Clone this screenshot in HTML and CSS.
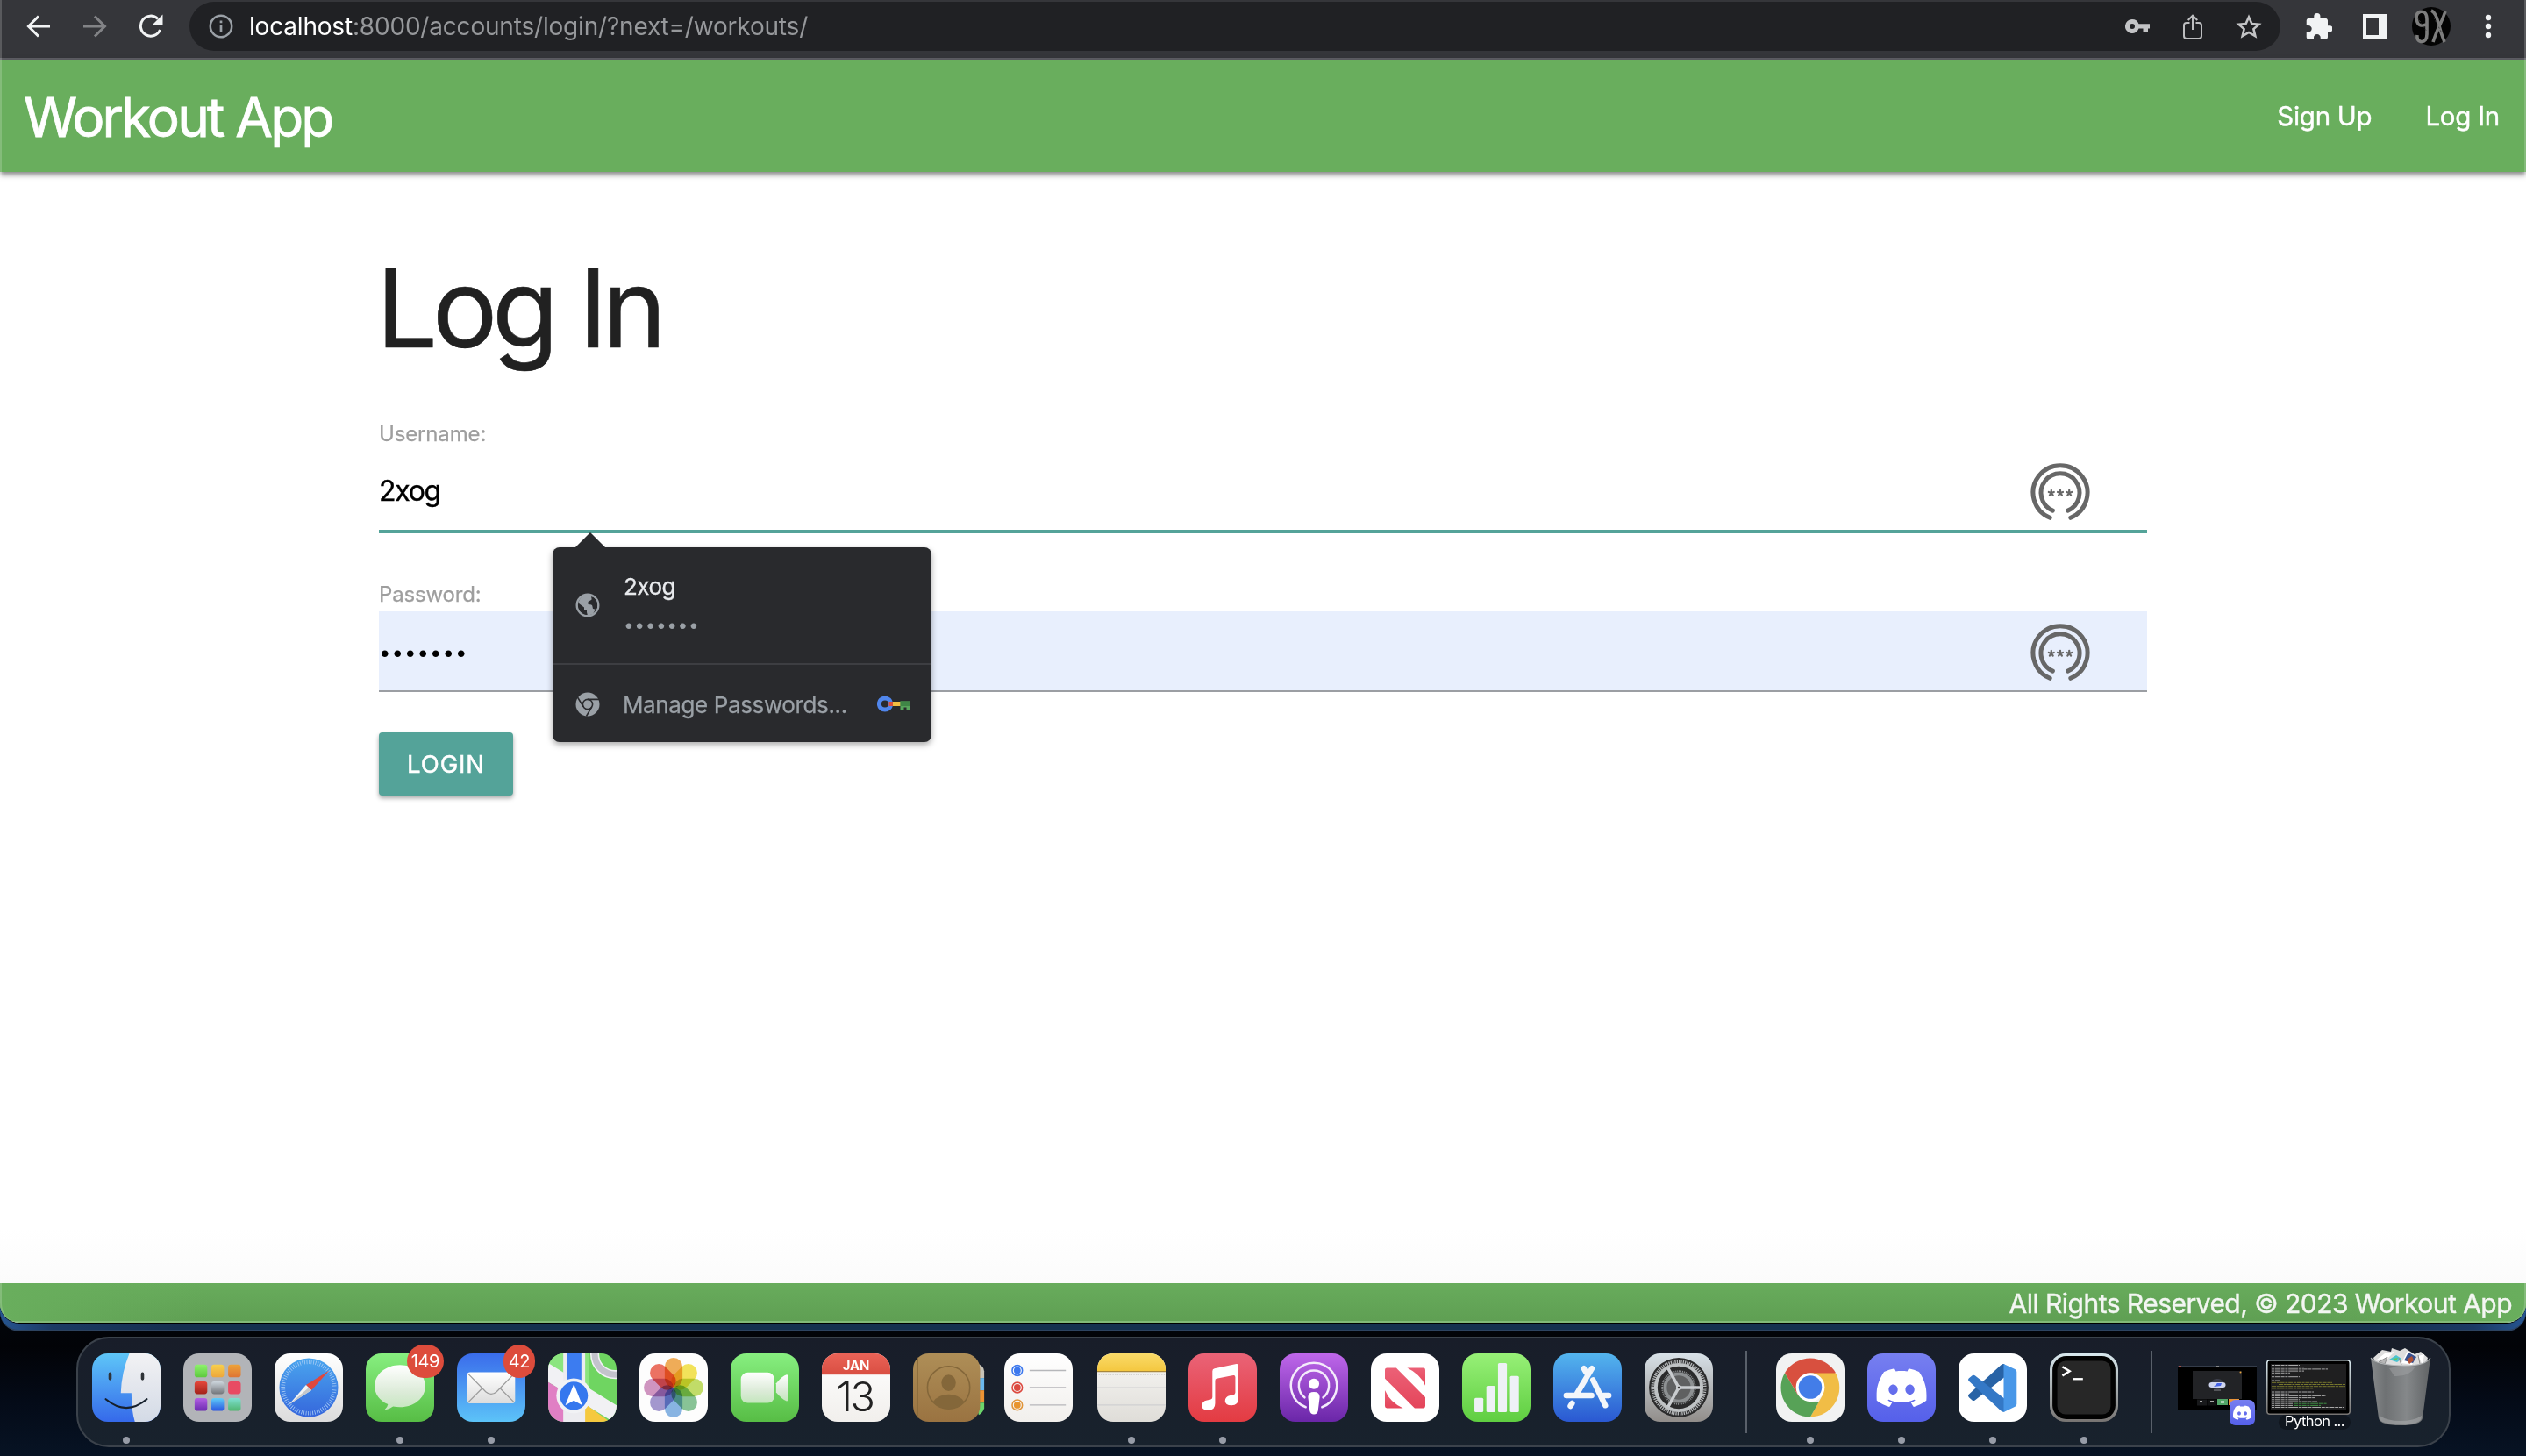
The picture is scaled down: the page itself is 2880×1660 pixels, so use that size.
FILE: index.html
```html
<!DOCTYPE html>
<html lang="en">
<head>
<meta charset="utf-8">
<title>Workout App</title>
<link rel="stylesheet" href="styles.css">
</head>
<body>
<svg class="defs" width="0" height="0" aria-hidden="true">
  <defs>
    <linearGradient id="finderBlue" x1="0" y1="0" x2="0" y2="1"><stop offset="0" stop-color="#5ec6f8"/><stop offset="1" stop-color="#3569ea"/></linearGradient>
    <linearGradient id="finderWhite" x1="0" y1="0" x2="0" y2="1"><stop offset="0" stop-color="#f2f2f4"/><stop offset="1" stop-color="#d3dae6"/></linearGradient>
    <linearGradient id="green" x1="0" y1="0" x2="0" y2="1"><stop offset="0" stop-color="#87ef80"/><stop offset="1" stop-color="#57bd45"/></linearGradient>
    <linearGradient id="mailBlue" x1="0" y1="0" x2="0" y2="1"><stop offset="0" stop-color="#3a6ceb"/><stop offset="1" stop-color="#5cc3f8"/></linearGradient>
    <linearGradient id="paper" x1="0" y1="0" x2="0" y2="1"><stop offset="0" stop-color="#ffffff"/><stop offset="1" stop-color="#dcdcdc"/></linearGradient>
    <linearGradient id="paperWarm" x1="0" y1="0" x2="0" y2="1"><stop offset="0" stop-color="#ffffff"/><stop offset="1" stop-color="#f1efec"/></linearGradient>
    <linearGradient id="note" x1="0" y1="0" x2="0" y2="1"><stop offset="0" stop-color="#f8f7f5"/><stop offset="1" stop-color="#dfddd8"/></linearGradient>
    <linearGradient id="noteTop" x1="0" y1="0" x2="0" y2="1"><stop offset="0" stop-color="#fadb6a"/><stop offset="1" stop-color="#f4c73f"/></linearGradient>
    <linearGradient id="dial" x1="0" y1="0" x2="0" y2="1"><stop offset="0" stop-color="#4aa5ee"/><stop offset="1" stop-color="#3566dc"/></linearGradient>
    <linearGradient id="bubble" x1="0" y1="0" x2="0" y2="1"><stop offset="0" stop-color="#ffffff"/><stop offset=".6" stop-color="#dcebd8"/><stop offset="1" stop-color="#c4e6bd"/></linearGradient>
    <linearGradient id="calTop" x1="0" y1="0" x2="0" y2="1"><stop offset="0" stop-color="#ea6357"/><stop offset="1" stop-color="#d94e42"/></linearGradient>
    <linearGradient id="leather" x1="0" y1="0" x2="0" y2="1"><stop offset="0" stop-color="#ae8e57"/><stop offset="1" stop-color="#9a7341"/></linearGradient>
    <linearGradient id="music" x1="0" y1="0" x2="0" y2="1"><stop offset="0" stop-color="#ea6377"/><stop offset="1" stop-color="#e33b42"/></linearGradient>
    <linearGradient id="pod" x1="0" y1="0" x2="0" y2="1"><stop offset="0" stop-color="#bf67ea"/><stop offset="1" stop-color="#6a26a8"/></linearGradient>
    <linearGradient id="news" x1="0" y1="0" x2="0" y2="1"><stop offset="0" stop-color="#ec6177"/><stop offset="1" stop-color="#e4455a"/></linearGradient>
    <linearGradient id="numbers" x1="0" y1="0" x2="0" y2="1"><stop offset="0" stop-color="#97f077"/><stop offset="1" stop-color="#5fce41"/></linearGradient>
    <linearGradient id="store" x1="0" y1="0" x2="0" y2="1"><stop offset="0" stop-color="#53b5ee"/><stop offset="1" stop-color="#2a58d2"/></linearGradient>
    <linearGradient id="steel" x1="0" y1="0" x2="0" y2="1"><stop offset="0" stop-color="#d8e1e8"/><stop offset="1" stop-color="#918d8a"/></linearGradient>
    <linearGradient id="discordBg" x1="0" y1="0" x2="0" y2="1"><stop offset="0" stop-color="#777ff0"/><stop offset="1" stop-color="#5560ea"/></linearGradient>
    <linearGradient id="frame" x1="0" y1="0" x2="0" y2="1"><stop offset="0" stop-color="#d8e8ee"/><stop offset="1" stop-color="#777472"/></linearGradient>
    <linearGradient id="bin" x1="0" y1="0" x2="1" y2="0"><stop offset="0" stop-color="#878a8c"/><stop offset=".25" stop-color="#6e7173"/><stop offset=".6" stop-color="#85888a"/><stop offset="1" stop-color="#606365"/></linearGradient>
    <linearGradient id="lp1" x1="0" y1="0" x2="0" y2="1"><stop offset="0" stop-color="#8df26c"/><stop offset="1" stop-color="#5dc93e"/></linearGradient>
    <linearGradient id="lp2" x1="0" y1="0" x2="0" y2="1"><stop offset="0" stop-color="#f7cf4d"/><stop offset="1" stop-color="#eda63a"/></linearGradient>
    <linearGradient id="lp3" x1="0" y1="0" x2="0" y2="1"><stop offset="0" stop-color="#eda23a"/><stop offset="1" stop-color="#de7433"/></linearGradient>
    <linearGradient id="lp4" x1="0" y1="0" x2="0" y2="1"><stop offset="0" stop-color="#e5473a"/><stop offset="1" stop-color="#a3231b"/></linearGradient>
    <linearGradient id="lp5" x1="0" y1="0" x2="0" y2="1"><stop offset="0" stop-color="#cdd6dd"/><stop offset="1" stop-color="#73757a"/></linearGradient>
    <linearGradient id="lp7" x1="0" y1="0" x2="0" y2="1"><stop offset="0" stop-color="#b35fe4"/><stop offset="1" stop-color="#6b2bb0"/></linearGradient>
    <linearGradient id="lp8" x1="0" y1="0" x2="0" y2="1"><stop offset="0" stop-color="#5fcdf9"/><stop offset="1" stop-color="#2a55e0"/></linearGradient>
    <linearGradient id="lp9" x1="0" y1="0" x2="0" y2="1"><stop offset="0" stop-color="#7fe0d2"/><stop offset="1" stop-color="#4fb56f"/></linearGradient>
    <clipPath id="tile"><rect width="100" height="100" rx="23"/></clipPath>
    <symbol id="discord" viewBox="0 0 24 24"><path fill="#fff" d="M20.317 4.3698a19.7913 19.7913 0 00-4.8851-1.5152.0741.0741 0 00-.0785.0371c-.211.3753-.4447.8648-.6083 1.2495-1.8447-.2762-3.68-.2762-5.4868 0-.1636-.3933-.4058-.8742-.6177-1.2495a.077.077 0 00-.0785-.037 19.7363 19.7363 0 00-4.8852 1.515.0699.0699 0 00-.0321.0277C.5334 9.0458-.319 13.5799.0992 18.0578a.0824.0824 0 00.0312.0561c2.0528 1.5076 4.0413 2.4228 5.9929 3.0294a.0777.0777 0 00.0842-.0276c.4616-.6304.8731-1.2952 1.226-1.9942a.076.076 0 00-.0416-.1057c-.6528-.2476-1.2743-.5495-1.8722-.8923a.077.077 0 01-.0076-.1277c.1258-.0943.2517-.1923.3718-.2914a.0743.0743 0 01.0776-.0105c3.9278 1.7933 8.18 1.7933 12.0614 0a.0739.0739 0 01.0785.0095c.1202.099.246.1981.3728.2924a.077.077 0 01-.0066.1276 12.2986 12.2986 0 01-1.873.8914.0766.0766 0 00-.0407.1067c.3604.698.7719 1.3628 1.225 1.9932a.076.076 0 00.0842.0286c1.961-.6067 3.9495-1.5219 6.0023-3.0294a.077.077 0 00.0313-.0552c.5004-5.177-.8382-9.6739-3.5485-13.6604a.061.061 0 00-.0312-.0286zM8.02 15.3312c-1.1825 0-2.1569-1.0857-2.1569-2.419 0-1.3332.9555-2.4189 2.157-2.4189 1.2108 0 2.1757 1.0952 2.1568 2.419 0 1.3332-.9555 2.4189-2.1569 2.4189zm7.9748 0c-1.1825 0-2.1569-1.0857-2.1569-2.419 0-1.3332.9554-2.4189 2.1569-2.4189 1.2108 0 2.1757 1.0952 2.1568 2.419 0 1.3332-.946 2.4189-2.1568 2.4189Z"/></symbol>
    <symbol id="keyring" viewBox="-34 -34 68 68">
      <g fill="none" stroke="#676767" stroke-width="5" stroke-linecap="round">
        <path d="M-11.8 28.3A31 31 0 1 1 11.8 28.3"/>
        <path d="M-8.6 20.1A22 22 0 1 1 8.6 20.1"/>
      </g>
      <g stroke="#676767" stroke-width="2.2" stroke-linecap="round">
        <path id="ast" d="M0 0V-3.2M0 0L3-1M0 0L1.9 2.6M0 0L-1.9 2.6M0 0L-3-1"/>
        <use href="#ast" x="-10.2"/><use href="#ast" x="10.2"/>
      </g>
    </symbol>
  </defs>
</svg>

<div class="rear-window">
<div class="window">
  <header class="toolbar">
    <div class="nav-buttons">
      <svg width="28" height="28" viewBox="0 0 28 28" fill="none" stroke="#f1f3f4" stroke-width="3"><path d="M27 14H3M14 2.5L2.5 14 14 25.500"/></svg>
      <svg width="28" height="28" viewBox="0 0 28 28" fill="none" stroke="#828386" stroke-width="3"><path d="M1 14H25M14 2.500L25.500 14 14 25.500"/></svg>
      <svg width="28" height="28" viewBox="0 0 28 28"><path d="M24.500 18A11.500 11.500 0 1 1 22 5.500" fill="none" stroke="#f1f3f4" stroke-width="3"/><path d="M27.500 .5V12.500H15.500Z" fill="#f1f3f4"/></svg>
    </div>
    <div class="omnibox">
      <svg class="info" width="28" height="28" viewBox="0 0 28 28"><circle cx="14" cy="14" r="12.200" fill="none" stroke="#9aa0a6" stroke-width="2.500"/><path d="M14 12.500V20.500M14 7.500V10.200" stroke="#9aa0a6" stroke-width="2.700"/></svg>
      <span class="url"><b>localhost</b>:8000/accounts/login/?next=/workouts/</span>
      <div class="omni-icons">
        <svg width="28" height="16" viewBox="0 0 28 16"><path fill="#c3c4c6" fill-rule="evenodd" d="M8 0a8 8 0 0 1 7.500 5.300H28V10.600H26V15H20.500V10.600H15.500A8 8 0 1 1 8 0zm0 5a3 3 0 1 0 0 6 3 3 0 0 0 0-6z"/></svg>
        <svg width="22" height="29" viewBox="0 0 22 29" fill="none" stroke="#bdbec0" stroke-width="2"><path d="M7.500 10H4Q1 10 1 13V25Q1 28 4 28H18Q21 28 21 25V13Q21 10 18 10H14.500M11 18V2M5.700 7L11 1.700 16.300 7"/></svg>
        <svg width="30" height="29" viewBox="0 0 30 29"><path d="M15 3.500L18.400 11 26.500 11.700 20.400 17.100 22.300 25.200 15 20.900 7.700 25.200 9.600 17.100 3.500 11.700 11.600 11Z" fill="none" stroke="#c3c4c6" stroke-width="2.600"/></svg>
      </div>
    </div>
    <div class="extensions">
      <svg width="30" height="30" viewBox="1.500 1 21 21"><path fill="#f1f3f4" d="M20.500 11H19V7c0-1.100-.9-2-2-2h-4V3.500a2.500 2.500 0 0 0-5 0V5H4c-1.100 0-1.990.9-1.990 2v3.800H3.500c1.490 0 2.700 1.210 2.700 2.700s-1.210 2.700-2.700 2.700H2V20c0 1.100.9 2 2 2h3.800v-1.500c0-1.490 1.210-2.700 2.700-2.700s2.700 1.210 2.700 2.700V22H17c1.100 0 2-.9 2-2v-4h1.500a2.500 2.500 0 0 0 0-5z"/></svg>
      <svg width="28" height="28" viewBox="0 0 28 28"><path fill="#f1f3f4" fill-rule="evenodd" d="M0 0H28V28H0ZM4 4V24H18V4Z"/></svg>
      <svg width="44" height="44" viewBox="0 0 44 44"><circle cx="22" cy="22" r="22" fill="#040404"/><g fill="none" stroke="#7d7d7d" stroke-width="3.600"><path d="M6 17Q3 8 9 5.500Q17 4 17 14V31Q17 40 10 39.500Q5 38 6 32M6 17Q8 23 16 20M22 4Q27 6 30 18T37 40M38 5Q34 16 31 22T24 40"/></g><path d="M6 12L17 28M25 12L34 30" stroke="#444" stroke-width="1" stroke-dasharray="2 2"/></svg>
      <svg width="8" height="28" viewBox="0 0 8 28" fill="#f1f3f4"><circle cx="4" cy="4" r="3.200"/><circle cx="4" cy="14" r="3.200"/><circle cx="4" cy="24" r="3.200"/></svg>
    </div>
  </header>

  <nav class="navbar">
    <a class="brand">Workout App</a>
    <div class="links"><a>Sign Up</a><a>Log In</a></div>
  </nav>

  <main class="content">
    <h1>Log In</h1>
    <label class="label">Username:</label>
    <div class="field focused">
      <span class="value">2xog</span>
      <svg class="keyring" width="68" height="68"><use href="#keyring"/></svg>
      <div class="popup">
        <svg class="arrow" width="36" height="18" viewBox="0 0 36 18"><path d="M0 18L18 0 36 18Z" fill="#292a2d"/></svg>
        <div class="suggestion">
          <svg width="28" height="28" viewBox="0 0 28 28"><circle cx="14" cy="14" r="12.300" fill="#292a2d" stroke="#9aa0a6" stroke-width="2.400"/><path fill="#9aa0a6" d="M8 4L19 2.500Q21 6 18 8L14.500 10V13L19 13.500 20 18 23 18.500 20 24 14 26 13 22 8.500 17.500 3.500 12Q4 7 8 4Z"/><path fill="#292a2d" d="M4 12L10 16.500V19L13 20V25Q4 23 3 14ZM18 4Q26 7 25 17L22 19 20.500 15 17 12.500 19 9Z"/></svg>
          <div class="credentials"><span class="user">2xog</span><span class="mask">•••••••</span></div>
        </div>
        <div class="manage">
          <svg width="28" height="28" viewBox="0 0 28 28"><circle cx="14" cy="14" r="13.500" fill="#9aa0a6"/><g fill="none" stroke="#292a2d" stroke-width="1.600"><circle cx="14" cy="14" r="5.600"/><path d="M14 8.400H27M9.200 16.800L2.500 6M18.800 16.800L12.500 27.500"/></g></svg>
          <span class="manage-text">Manage Passwords...</span>
          <svg width="38" height="19" viewBox="0 0 38 19"><circle cx="9" cy="9.500" r="6.600" fill="none" stroke="#5086ec" stroke-width="5"/><path d="M13.500 7H19V12H13.500Z" fill="#d9503f"/><path d="M18 7H27V12H18Z" fill="#f2bd42"/><path d="M26.500 6.500H37.500V17H33.500V13.500H30.500V17H26.500Z" fill="#58a55c"/><path d="M26.500 6.500H37.500V12H26.500Z" fill="#3f8646"/></svg>
        </div>
      </div>
    </div>
    <label class="label second">Password:</label>
    <div class="field autofill">
      <span class="value mask">•••••••</span>
      <svg class="keyring" width="68" height="68"><use href="#keyring"/></svg>
    </div>
    <button class="login">LOGIN</button>
  </main>

  <footer class="footer">All Rights Reserved, © 2023 Workout App</footer>
</div>
</div>

<div class="dock">
  <div class="app running"><svg viewBox="0 0 100 100"><g clip-path="url(#tile)"><rect width="100" height="100" fill="url(#finderBlue)"/><path d="M54.500 0Q43 28 42 58H57.500Q57.500 84 62.500 100H100V0Z" fill="url(#finderWhite)"/></g><path d="M26.300 30V37M73.700 30V37" stroke="#2f3338" stroke-width="4.600" stroke-linecap="round"/><path d="M20 67Q50 92 80 67" fill="none" stroke="#16202c" stroke-width="2.800" stroke-linecap="round"/></svg></div>
  <div class="app"><svg viewBox="0 0 100 100"><rect width="100" height="100" rx="23" fill="#b2b4b8"/><rect x="16.500" y="16.500" width="18.500" height="18.500" rx="4" fill="url(#lp1)"/><rect x="41" y="16.500" width="18.500" height="18.500" rx="4" fill="url(#lp2)"/><rect x="65.500" y="16.500" width="18.500" height="18.500" rx="4" fill="url(#lp3)"/><rect x="16.500" y="41" width="18.500" height="18.500" rx="4" fill="url(#lp4)"/><rect x="41" y="41" width="18.500" height="18.500" rx="4" fill="url(#lp5)"/><rect x="65.500" y="41" width="18.500" height="18.500" rx="4" fill="#e84b63"/><rect x="16.500" y="65.500" width="18.500" height="18.500" rx="4" fill="url(#lp7)"/><rect x="41" y="65.500" width="18.500" height="18.500" rx="4" fill="url(#lp8)"/><rect x="65.500" y="65.500" width="18.500" height="18.500" rx="4" fill="url(#lp9)"/></svg></div>
  <div class="app"><svg viewBox="0 0 100 100"><rect width="100" height="100" rx="23" fill="url(#paper)"/><circle cx="50" cy="50" r="43" fill="url(#dial)"/><circle cx="50" cy="50" r="37.500" fill="none" stroke="#a9cdf5" stroke-width="6" stroke-dasharray="1 2.270"/><path d="M80 25L46 46 54 54Z" fill="#e0483e"/><path d="M21 75L46 46 54 54Z" fill="#f3f3f3"/><path d="M21 75L50 50 54 54Z" fill="#c4c7cb"/></svg></div>
  <div class="app running"><svg viewBox="0 0 100 100"><rect width="100" height="100" rx="23" fill="url(#green)"/><path d="M50 17C71 17 87 31 87 48S71 78.500 50 78.500Q45 78.500 40 77.500Q34 82 27 83Q32 79 32.500 74.500C20 69 13 59 13 48 13 31 29 17 50 17Z" fill="url(#bubble)"/></svg><span class="badge wide">149</span></div>
  <div class="app running"><svg viewBox="0 0 100 100"><rect width="100" height="100" rx="23" fill="url(#mailBlue)"/><rect x="15" y="27.500" width="70" height="45.500" rx="4" fill="url(#paper)"/><path d="M17 71L37 51M83 71L63 51M16.500 30L42 56Q50 63 58 56L83.500 30" fill="none" stroke="#9b9b9b" stroke-width="1.600"/></svg><span class="badge">42</span></div>
  <div class="app"><svg viewBox="0 0 100 100"><g clip-path="url(#tile)"><rect width="100" height="100" fill="#6fd561"/><path d="M0 0H60V60L0 20Z" fill="#8be57f"/><path d="M0 14L100 76V103L0 42Z" fill="#f1f1f4"/><path d="M0 42L24 56V100H0Z" fill="#e07fc4"/><path d="M53 100V73L90 100Z" fill="#f5c93f"/><path d="M22 0H54V100H22Z" fill="#ececf0"/><path d="M27.500 0H48.500V50H27.500Z" fill="#3c7cf0"/><circle cx="98" cy="1" r="30" fill="none" stroke="#f1f1f4" stroke-width="13"/><circle cx="98" cy="1" r="30" fill="none" stroke="#c3c3cc" stroke-width="9"/></g><circle cx="37.500" cy="62" r="25.500" fill="#f1f2f5"/><circle cx="37.500" cy="62" r="20.500" fill="#3577ee"/><path d="M37.500 45L50 76 37.500 69 25 76Z" fill="#fff"/></svg></div>
  <div class="app"><svg viewBox="0 0 100 100"><rect width="100" height="100" rx="23" fill="#fdfdfd"/><g class="petals"><rect x="37" y="6.500" width="26" height="43" rx="13" fill="#efa03c"/><rect x="37" y="6.500" width="26" height="43" rx="13" fill="#f2e03e" transform="rotate(45 50 50)"/><rect x="37" y="6.500" width="26" height="43" rx="13" fill="#b9d84f" transform="rotate(90 50 50)"/><rect x="37" y="6.500" width="26" height="43" rx="13" fill="#74bb85" transform="rotate(135 50 50)"/><rect x="37" y="6.500" width="26" height="43" rx="13" fill="#74a9e0" transform="rotate(180 50 50)"/><rect x="37" y="6.500" width="26" height="43" rx="13" fill="#9486c8" transform="rotate(225 50 50)"/><rect x="37" y="6.500" width="26" height="43" rx="13" fill="#c983b8" transform="rotate(270 50 50)"/><rect x="37" y="6.500" width="26" height="43" rx="13" fill="#ea5a48" transform="rotate(315 50 50)"/></g></svg></div>
  <div class="app"><svg viewBox="0 0 100 100"><rect width="100" height="100" rx="23" fill="url(#green)"/><rect x="15" y="28" width="49" height="44.500" rx="10" fill="url(#bubble)"/><path d="M66.500 44Q76 32 82 31Q84.500 31 84.500 34V67Q84.500 70 82 70Q76 68 66.500 57Z" fill="url(#bubble)"/></svg></div>
  <div class="app"><svg viewBox="0 0 100 100"><g clip-path="url(#tile)"><rect width="100" height="100" fill="url(#paperWarm)"/><rect width="100" height="31" fill="url(#calTop)"/></g><text x="50" y="24" class="cal-month">JAN</text><text x="48" y="85" class="cal-day">13</text></svg></div>
  <div class="app"><svg viewBox="0 0 100 100"><path d="M92 14Q104 18 104 26V36H92Z" fill="#c9c4b8"/><path d="M92 36H104V54H92Z" fill="#6bb9ee"/><path d="M92 54H104V72H92Z" fill="#ee9434"/><path d="M92 72H104V80Q102 87 96 90Z" fill="#6cd66b"/><rect width="98" height="100" rx="23" fill="url(#leather)"/><path d="M7 6V94" stroke="#8a6c3c" stroke-width="1.200"/><circle cx="52" cy="50" r="31" fill="none" stroke="#84673a" stroke-width="2"/><ellipse cx="52" cy="43" rx="10.500" ry="12" fill="#84673a"/><path d="M29 71Q37 60 52 60T75 71Q66 81 52 81T29 71Z" fill="#84673a"/></svg></div>
  <div class="app"><svg viewBox="0 0 100 100"><rect width="100" height="100" rx="23" fill="url(#paperWarm)"/><g fill="none" stroke-width="2"><circle cx="19" cy="25" r="7.500" stroke="#3c78ee"/><circle cx="19" cy="50" r="7.500" stroke="#dc4a40"/><circle cx="19" cy="75.500" r="7.500" stroke="#e09437"/><path d="M37 25H90M37 50H90M37 75.500H90" stroke="#b6b7ba" stroke-width="1.700"/></g><circle cx="19" cy="25" r="5" fill="#3c78ee"/><circle cx="19" cy="50" r="5" fill="#dc4a40"/><circle cx="19" cy="75.500" r="5" fill="#e8952f"/></svg></div>
  <div class="app running shift"><svg viewBox="0 0 100 100"><g clip-path="url(#tile)"><rect width="100" height="100" fill="url(#note)"/><rect width="100" height="26" fill="url(#noteTop)"/><path d="M0 26.500H100" stroke="#a8873c" stroke-width="1.500"/><path d="M2 30.500H100" stroke="#b5b4b2" stroke-width="2" stroke-dasharray="1.700 1.700"/><path d="M0 50H100M0 75.500H100" stroke="#cfd0d2" stroke-width="1.600"/></g></svg></div>
  <div class="app running"><svg viewBox="0 0 100 100"><rect width="100" height="100" rx="23" fill="url(#music)"/><path d="M35 26Q35 23 38 22.200L70 15.500Q73 15 73 18V66Q73 76 63 76Q53.500 76 53.500 69.500Q53.500 63 61 61.500L66 60.500Q68.500 60 68.500 57V35Q68.500 31.500 65.500 32L41 37Q39 37.500 39 40V73Q39 83 29 83Q19.500 83 19.500 76.500Q19.500 70 27 68.500L32 67.500Q35 67 35 64Z" fill="#fff"/></svg></div>
  <div class="app"><svg viewBox="0 0 100 100"><rect width="100" height="100" rx="23" fill="url(#pod)"/><g fill="none" stroke="#f4ebfb" stroke-width="3.200" stroke-linecap="round"><path d="M38 78.500A33.500 33.500 0 1 1 62 78.500"/><path d="M36.500 64.500A22 22 0 1 1 63.500 64.500"/></g><circle cx="50" cy="44.500" r="7.800" fill="#fff"/><path d="M41.500 64Q41.500 56.500 50 56.500T58.500 64L56 84Q55 89 50 89T44 84Z" fill="#fff"/></svg></div>
  <div class="app"><svg viewBox="0 0 100 100"><rect width="100" height="100" rx="23" fill="#fff"/><g fill="url(#news)"><path d="M20.500 24Q20.500 21 23.500 21H37L79.500 64V77Q79.500 80 76.500 80H64L20.500 37Z"/><path d="M53 21H76.500Q79.500 21 79.500 24V47Q72 30 53 21Z"/><path d="M20.500 54V77Q20.500 80 23.500 80H47Q28 72 20.500 54Z"/></g></svg></div>
  <div class="app"><svg viewBox="0 0 100 100"><rect width="100" height="100" rx="23" fill="url(#numbers)"/><g fill="#eef1f6"><rect x="18" y="65" width="13" height="21" rx="2"/><rect x="35.500" y="47.500" width="13" height="38.500" rx="2"/><rect x="52.500" y="14" width="13" height="72" rx="2"/><rect x="70" y="33" width="13" height="53" rx="2"/></g></svg></div>
  <div class="app"><svg viewBox="0 0 100 100"><rect width="100" height="100" rx="23" fill="url(#store)"/><g stroke="#f3f6fa" stroke-width="8.200" stroke-linecap="round"><path d="M44.500 22L48 28M58 39L76 76M56.500 22L35 58M27.500 73L25 77M19 61.500H56M72 61.500H81"/></g></svg></div>
  <div class="app"><svg viewBox="0 0 100 100"><rect width="100" height="100" rx="23" fill="url(#steel)"/><circle cx="50" cy="50" r="43.500" fill="#2b2b2c"/><circle cx="50" cy="50" r="38" fill="none" stroke="#b3b5b7" stroke-width="5" stroke-dasharray="1.700 1.280"/><circle cx="50" cy="50" r="33.500" fill="none" stroke="#bfc2c4" stroke-width="5"/><circle cx="50" cy="50" r="20" fill="#5f6061" stroke="#8d9092" stroke-width="5"/><circle cx="50" cy="50" r="24" fill="none" stroke="#8d9092" stroke-width="2.500" stroke-dasharray="1.300 1.200"/><g stroke="#c9cccf" stroke-width="4.500"><path d="M50 50H82M50 50L34.500 22M50 50L34.500 78"/></g><circle cx="50" cy="50" r="4" fill="#c9cccf"/><circle cx="50" cy="50" r="1.500" fill="#333"/></svg></div>
  <span class="divider"></span>
  <div class="app running"><svg viewBox="0 0 100 100"><rect width="100" height="100" rx="23" fill="#f1f2f2"/><path d="M50 50L12.800 28.500A43 43 0 0 1 87.200 28.500Z" fill="#d8503f"/><path d="M50 50V29H87.200A43 43 0 0 1 50 93L68.200 60.500Z" fill="#f1bd46"/><path d="M12.800 28.500L31.800 60.500 50 71H62.500L50 93A43 43 0 0 1 12.800 28.500Z" fill="#57a257"/><path d="M12.800 28.500L50 28.500V50L31.800 60.500Z" fill="#d8503f"/><circle cx="50" cy="49.500" r="21" fill="#fff"/><circle cx="50" cy="49.500" r="17" fill="#437de8"/></svg></div>
  <div class="app running"><svg viewBox="0 0 100 100"><rect width="100" height="100" rx="23" fill="url(#discordBg)"/><use href="#discord" x="13.300" y="13.500" width="73.500" height="73.500"/></svg></div>
  <div class="app running"><svg viewBox="0 0 100 100"><rect width="100" height="100" rx="23" fill="#fff"/><path d="M67 15.500V35L24 68.500Q22 70 20 68.500L15 64Q13 62 15 60L62 17Q64 15 67 15.500Z" fill="#2863a6"/><path d="M67 85.500V66L24 32.500Q22 31 20 32.500L15 36.500Q13 38.500 15 40.500L62 84Q64 86 67 85.500Z" fill="#3478c6"/><path d="M66 15.500L82.500 23Q85 24.500 85 27V74Q85 77 82.500 78L66 85.800Z" fill="#4897e8"/></svg></div>
  <div class="app running"><svg viewBox="0 0 100 100"><rect width="100" height="100" rx="23" fill="url(#frame)"/><rect x="4" y="4" width="92" height="92" rx="20" fill="#020202"/><rect x="11" y="11" width="78" height="78" rx="12" fill="#272727"/><path d="M18.500 19.500L29 26 18.500 32.500" fill="none" stroke="#fff" stroke-width="3.200"/><path d="M34 37.500H48.500" stroke="#fff" stroke-width="3"/></svg></div>
  <span class="divider second"></span>
  <div class="thumb">
    <svg width="90" height="50" viewBox="0 0 90 50"><rect width="90" height="50" fill="#000"/><path d="M0 .7H90" stroke="#343c4a" stroke-width="1.400"/><path d="M43 .7H47" stroke="#9a9a9a"/><path d="M1 .7H4" stroke="#c0564c"/><rect x="17" y="6" width="56" height="32" fill="#222326"/><rect x="38" y="15" width="14" height="12" rx="6" fill="#3b3d49"/><rect x="35.500" y="19" width="19" height="6" rx="3" fill="#cfd5ee"/><path d="M41 24L45 20H50L49 23Z" fill="#4562e8"/><path d="M41 28H49" stroke="#85878c"/><circle cx="71.500" cy="7.500" r="1" fill="#e8a33c"/><rect x="22" y="38.500" width="11" height="7" fill="#18191b"/><rect x="33.500" y="38.500" width="11" height="7" fill="#101112"/><path d="M25 41H28M37 41H41" stroke="#ddd" stroke-width="1.400"/><rect x="45" y="38" width="12" height="7" fill="#52a568"/><rect x="58" y="38" width="12" height="7" fill="#e9953c"/><path d="M49 41.500H53" stroke="#fff" stroke-width="2"/></svg>
    <svg class="mini" width="29" height="29" viewBox="0 0 100 100"><rect width="100" height="100" rx="23" fill="url(#discordBg)"/><use href="#discord" x="13.300" y="13.500" width="73.500" height="73.500"/></svg>
  </div>
  <div class="thumb terminal">
    <svg width="96" height="63" viewBox="0 0 96 63"><rect x=".75" y=".75" width="94.500" height="61.500" rx="3" fill="#000" stroke="url(#frame)" stroke-width="1.600"/><rect x="5" y="5" width="86" height="52" fill="#1f1f20"/><g fill="none" stroke-width="1"><path stroke="#a9a9a9" stroke-dasharray="3 .8 6 .8 4 .8" d="M6 6.500H38M6 8.700H43M6 10.900H70M6 13.100H43M6 15.300H27M6 19.700H38M6 24H15M6 37H54M6 39.200H26M6 41.400H68M6 43.600H55M6 45.800H38M6 48H58M6 50.200H30M6 52.400H30M6 54.500H89"/><path stroke="#77772c" stroke-dasharray="5 .8 3 .8" d="M6 26.300H75M14 28.500H90M6 30.700H90M6 32.900H54"/><path stroke="#409245" stroke-dasharray="5 .8 3 .8" d="M31 50.200H69M31 52.400H62"/></g></svg>
    <span class="tip">Python ...</span>
  </div>
  <div class="bin">
    <svg width="70" height="90" viewBox="0 0 70 90"><path d="M4 12L14 3 24 5 25 1 34 4 40 1 51 8 58 5 66 12 62 24H8Z" fill="#dedede"/><path d="M8 14L17 7 28 5 20 13ZM36 18L43 4 52 10 48 20ZM55 10L62 8 60 20Z" fill="#fff"/><path d="M22 14L30 9 36 13 31 17Z" fill="#4cc3cf"/><path d="M26 13L32 12 30 15Z" fill="#66c65b"/><path d="M39 15L44 6 53 11 49 18Z" fill="#37508e"/><path d="M42 14L48 10 50 15 45 19Z" fill="#b05034"/><path d="M10 17L20 11 17 19ZM33 12L36 20M55 9L57 19" stroke="#8d8d8d" fill="#b7b7b7"/><path d="M1 12Q7 20 35 21T69 12L60 81Q58 89 35 89T10 81Z" fill="url(#bin)"/><path d="M11 78Q20 84 35 84T59 78L58.500 82Q55 88 35 88T11 82Z" fill="#a7a9aa" opacity=".6"/><path d="M1 12Q7 20 35 21T69 12" fill="none" stroke="#b0b3b5" stroke-width="1.200"/><path d="M28 33Q45 34 52 22Q40 20 22 24Z" fill="#a2a4a6" opacity=".5"/></svg>
  </div>
</div>
</body>
</html>
```
FILE: styles.css
```css
* { box-sizing: border-box; }

body {
  margin: 0;
  width: 2880px;
  height: 1660px;
  overflow: hidden;
  display: flex;
  flex-direction: column;
  background: linear-gradient(#020409 1518px, #020307 1535px, #040b18 1600px, #071324 1660px);
  font-family: Inter, "Liberation Sans", sans-serif;
}

svg { display: block; flex: none; }
.defs { position: absolute; }

.rear-window {
  height: 1518px;
  padding-bottom: 10px;
  border-bottom: 2px solid #2d4360;
  border-radius: 0 0 22px 22px;
  background: linear-gradient(90deg, #265591, #1b3a64 60px, #15304f 200px, #15304f 2700px, #1b3a64 2820px, #265591);
}

.window {
  position: relative;
  height: 1508px;
  display: flex;
  flex-direction: column;
  background: linear-gradient(#fff 1400px, #fbfbfb 1463px);
  border-radius: 0 0 22px 22px;
  overflow: hidden;
  box-shadow: 0 1px 0 #000;
}
/* Light rim down both sides of the window */
.window::after {
  content: "";
  position: absolute;
  inset: 0;
  border: solid rgba(255, 255, 255, .18);
  border-width: 0 2px;
  border-radius: 0 0 22px 22px;
  pointer-events: none;
}

.toolbar {
  flex: none;
  height: 68px;
  border-bottom: 2px solid #5f5f65;
  background: #35363a;
  display: flex;
  padding: 2px 39px 8px 30px;
}

.nav-buttons { display: flex; gap: 36px; align-items: center; width: 186px; }

.omnibox {
  width: 2384px;
  border-radius: 28px;
  background: #202124;
  display: flex;
  align-items: center;
  padding: 0 21px 0 22px;
}

.url {
  margin-left: 18px;
  font-size: 28px;
  letter-spacing: -0.19px;
  color: #96989b;
}
.url b { font-weight: 400; color: #fff; }

.omni-icons { display: flex; align-items: center; gap: 38px; margin-left: auto; }

.extensions { display: flex; align-items: center; gap: 28px; margin-left: 29px; flex: 1; }
.extensions svg:nth-child(1) { margin-right: 7px; }
.extensions svg:last-child { margin-left: auto; }

.navbar {
  flex: none;
  height: 128px;
  background: #69ae5d;
  box-shadow: 0 3px 6px rgba(0, 0, 0, .5);
  display: flex;
  align-items: center;
  justify-content: space-between;
  padding: 0 30px 0 27px;
  color: #fff;
  -webkit-text-stroke: .4px #fff;
}
.brand { font-size: 62px; letter-spacing: -2.8px; line-height: 80px; padding-top: 3px; -webkit-text-stroke: .8px #fff; }
.links { display: flex; gap: 61px; font-size: 29.5px; letter-spacing: -0.25px; }

.content {
  flex: 1;
  padding: 87px 432px 0;
  display: flex;
  flex-direction: column;
}

h1 {
  margin: 0 0 61px -3px;
  font-weight: 400;
  font-size: 124px;
  line-height: 136px;
  letter-spacing: -6.2px;
  color: #212121;
  -webkit-text-stroke: .6px #212121;
}

.label { font-size: 24px; line-height: 29px; letter-spacing: -0.15px; color: #9e9e9e; margin-bottom: 5px; -webkit-text-stroke: .25px #9e9e9e; }
.label.second { margin-top: 55px; }

.field {
  position: relative;
  height: 92px;
  display: flex;
  align-items: center;
  justify-content: space-between;
  padding-right: 65px;
}
.field.focused { height: 94px; border-bottom: 4px solid #54a399; }
.field.autofill { background: #e8effd; border-bottom: 2px solid #9b9ea3; }
.value { font-size: 32px; letter-spacing: -1.3px; color: #000; -webkit-text-stroke: .4px #000; }
.keyring { position: relative; top: 3px; }

.mask { font-size: 21px; letter-spacing: .5px; }
.value.mask { font-size: 24px; letter-spacing: 1px; position: relative; top: 1px; -webkit-text-stroke: 0; }

.popup {
  position: absolute;
  z-index: 2;
  left: 198px;
  top: 110px;
  width: 432px;
  height: 222px;
  border-radius: 8px;
  background: #292a2d;
  box-shadow: 0 3px 7px rgba(0, 0, 0, .35);
}
.arrow { position: absolute; left: 25px; top: -17px; }
.suggestion {
  height: 134px;
  border-bottom: 2px solid #3d3e42;
  display: flex;
  align-items: center;
  gap: 27px;
  padding-left: 26px;
}
.credentials { display: flex; flex-direction: column; gap: 12px; padding-top: 1px; }
.user { font-size: 26px; line-height: 32px; letter-spacing: -0.5px; color: #e8eaed; -webkit-text-stroke: .3px #e8eaed; }
.credentials .mask { line-height: 32px; color: #9aa0a6; }
.manage { height: 89px; display: flex; align-items: center; padding-left: 26px; }
.manage-text { margin-left: 26px; padding-top: 1px; width: 290px; font-size: 26px; letter-spacing: -0.38px; white-space: nowrap; color: #9aa0a6; -webkit-text-stroke: .25px #9aa0a6; }

.login {
  margin: 46px 0 0;
  width: 153px;
  height: 72px;
  padding: 1px 0 0;
  border: 0;
  border-radius: 4px;
  background: #54a399;
  box-shadow: 0 3px 5px rgba(0, 0, 0, .35);
  color: #fff;
  font: 400 27.5px/71px Inter, sans-serif;
  letter-spacing: .9px;
  -webkit-text-stroke: .5px #fff;
}

.footer {
  flex: none;
  height: 45px;
  border-bottom: 2px solid #82b978;
  padding-right: 16px;
  background: linear-gradient(90deg, #69ae5d, rgba(105, 174, 93, 0) 240px, rgba(105, 174, 93, 0) 2640px, #69ae5d), linear-gradient(#68ac5c, #5f9f53);
  color: #f3f6f2;
  font-size: 30px;
  line-height: 46px;
  letter-spacing: -0.53px;
  text-align: right;
  -webkit-text-stroke: .4px #f3f6f2;
}

.dock {
  margin: 6px 86px 0 87px;
  height: 126px;
  border: 2px solid #3b424b;
  border-radius: 37px;
  background: linear-gradient(#181d29, #18222d);
  display: flex;
  padding: 17px 0 0 3px;
}

.app { position: relative; flex: none; width: 104px; height: 103px; padding: 0 13px; }
.app > svg { width: 78px; height: 78px; overflow: visible; }
.app.shift { margin-left: 2px; }
.app.running::after {
  content: "";
  position: absolute;
  left: 48px;
  top: 95px;
  width: 8px;
  height: 8px;
  border-radius: 4px;
  background: #979ca7;
}

.badge {
  position: absolute;
  right: 2px;
  top: -10px;
  width: 36px;
  height: 38px;
  border-radius: 19px;
  background: #dd4c3c;
  color: #fff;
  font-size: 20px;
  line-height: 38px;
  letter-spacing: -0.4px;
  text-align: center;
}
.badge.wide { width: 42px; }

.petals rect { mix-blend-mode: multiply; opacity: .85; }
.cal-month { font: 700 19px Inter, sans-serif; fill: #fff; text-anchor: middle; }
.cal-day { font: 300 60px Inter, sans-serif; fill: #222; text-anchor: middle; letter-spacing: -3px; }

.divider { flex: none; width: 2px; height: 94px; margin: -3px 20px 0 24px; background: #59606a; }
.divider.second { margin: -3px 29px 0 24px; }

.thumb { position: relative; flex: none; width: 101px; padding-top: 14px; }
.thumb.terminal { width: 118px; padding-top: 7px; }
.mini { position: absolute; left: 59px; top: 53px; }
.tip {
  position: absolute;
  left: 14px;
  top: 70px;
  width: 82px;
  height: 17px;
  border-radius: 9px;
  background: #10161e;
  color: #fff;
  font-size: 16.5px;
  line-height: 15px;
  letter-spacing: -0.6px;
  text-align: center;
  white-space: nowrap;
}
.bin { flex: none; margin-top: -7px; }
```
